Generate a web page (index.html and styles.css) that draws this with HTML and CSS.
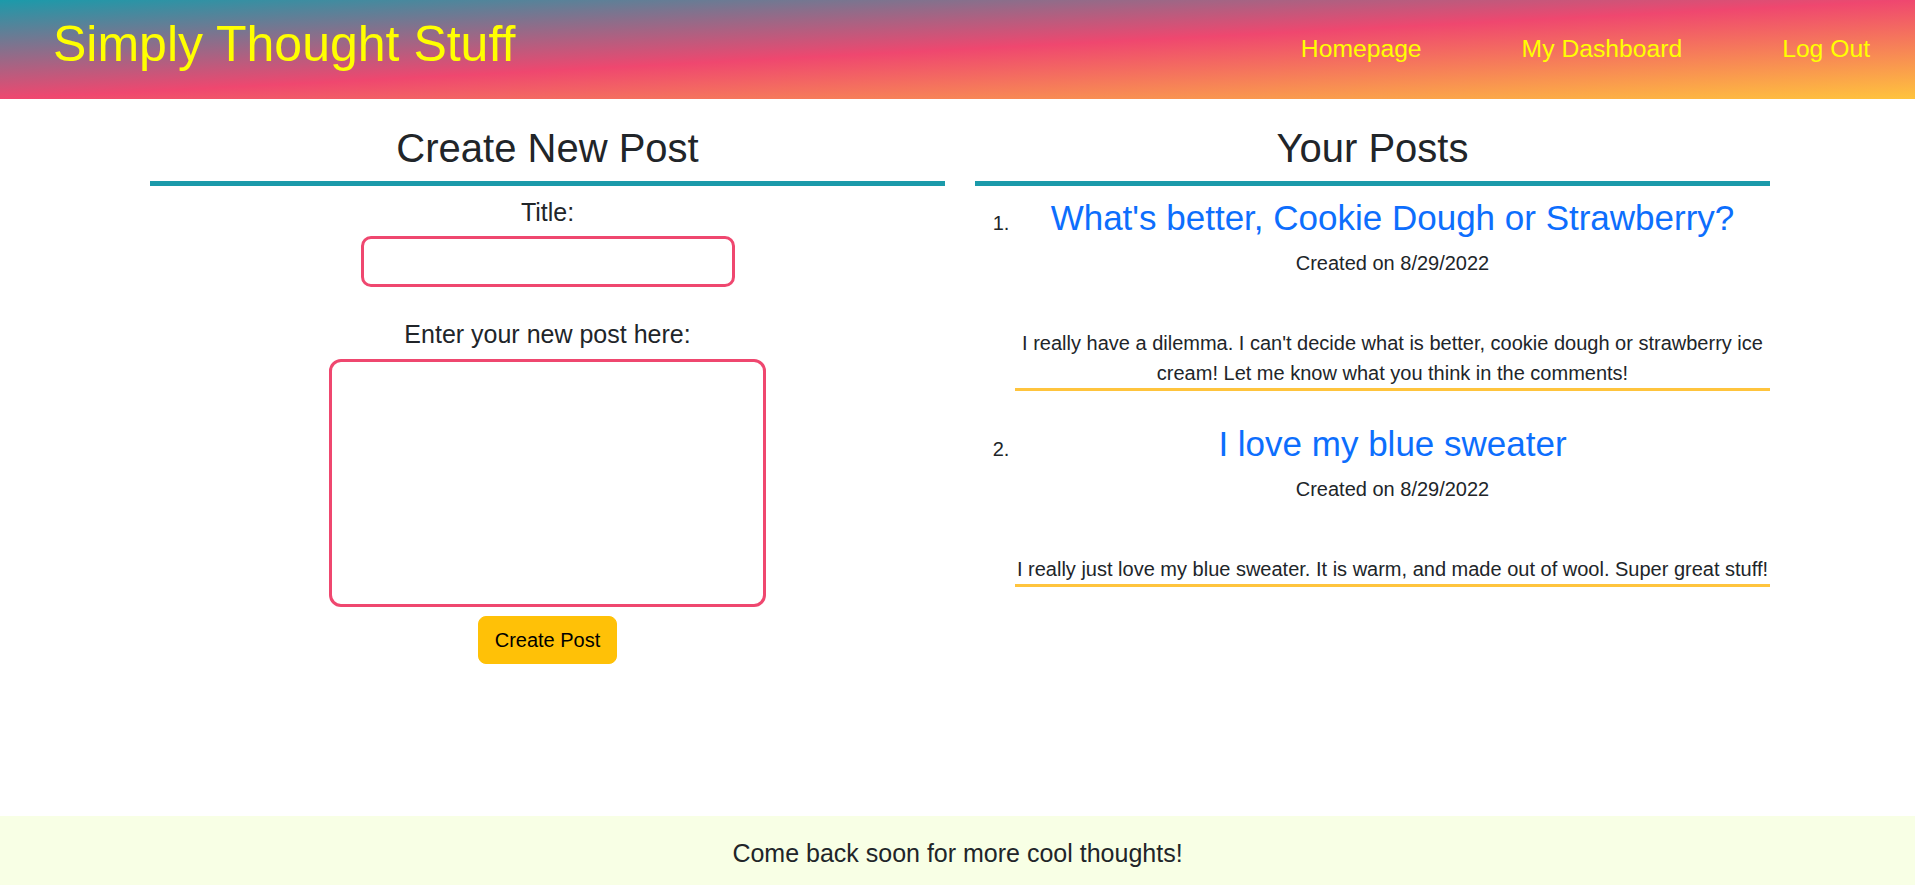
FILE: index.html
```html
<!DOCTYPE html>
<html lang="en">
<head>
<meta charset="utf-8">
<title>Simply Thought Stuff</title>
<link rel="stylesheet" href="styles.css">
</head>
<body>
<header class="site-header">
  <h1 class="brand">Simply Thought Stuff</h1>
  <nav class="nav">
    <a class="nav-link" href="#">Homepage</a>
    <a class="nav-link" href="#">My Dashboard</a>
    <a class="nav-link" href="#">Log Out</a>
  </nav>
</header>
<main class="main">
  <section class="column">
    <h2 class="section-title">Create New Post</h2>
    <form class="post-form">
      <label class="form-label" for="title">Title:</label>
      <input class="title-input" id="title" type="text">
      <label class="form-label label-body" for="body">Enter your new post here:</label>
      <textarea class="body-input" id="body"></textarea>
      <button class="btn-create" type="button">Create Post</button>
    </form>
  </section>
  <section class="column">
    <h2 class="section-title">Your Posts</h2>
    <ol class="post-list">
      <li class="post">
        <h3 class="post-title"><a href="#">What's better, Cookie Dough or Strawberry?</a></h3>
        <p class="post-date">Created on 8/29/2022</p>
        <p class="post-body">I really have a dilemma. I can't decide what is better, cookie dough or strawberry ice cream! Let me know what you think in the comments!</p>
      </li>
      <li class="post">
        <h3 class="post-title"><a href="#">I love my blue sweater</a></h3>
        <p class="post-date">Created on 8/29/2022</p>
        <p class="post-body">I really just love my blue sweater. It is warm, and made out of wool. Super great stuff!</p>
      </li>
    </ol>
  </section>
</main>
<footer class="site-footer">
  <p class="footer-text">Come back soon for more cool thoughts!</p>
</footer>
</body>
</html>
```
FILE: styles.css
```css
* { box-sizing: border-box; }

html, body { margin: 0; padding: 0; }

body {
  font-family: "Liberation Sans", Arial, sans-serif;
  color: #212529;
  background: #fff;
  min-height: 100vh;
  display: flex;
  flex-direction: column;
}

.site-header {
  height: 99px;
  display: flex;
  align-items: center;
  justify-content: space-between;
  padding: 0 45px 0 53px;
  background: linear-gradient(to bottom right, #1b9aaa 0%, #ef476f 50%, #ffc43d 100%);
}

.brand {
  margin: 0 0 10px 0;
  font-size: 50px;
  font-weight: 400;
  line-height: 1.15;
  color: #ffff00;
}

.nav {
  display: flex;
  gap: 100px;
  margin-top: 0;
}

.nav-link {
  font-size: 24.7px;
  line-height: 1.15;
  color: #ffff00;
  text-decoration: none;
}

.main {
  flex: 1;
  display: grid;
  grid-template-columns: 1fr 1fr;
  column-gap: 30px;
  align-items: start;
  padding: 25px 145px 0 150px;
}

.section-title {
  margin: 0;
  font-size: 40px;
  font-weight: 400;
  line-height: 48px;
  text-align: center;
  padding-bottom: 9px;
  border-bottom: 5px solid #1b9aaa;
}

.post-form {
  display: flex;
  flex-direction: column;
  align-items: center;
  padding-top: 8px;
}

.form-label {
  display: block;
  font-size: 25px;
  line-height: 36px;
  margin-bottom: 6px;
}

.label-body {
  margin-top: 29px;
  margin-bottom: 7px;
}

.title-input {
  width: 374px;
  height: 51px;
  border: 3px solid #ef476f;
  border-radius: 10px;
  background: #fff;
  font: inherit;
  outline: none;
}

.body-input {
  width: 437px;
  height: 248px;
  border: 3px solid #ef476f;
  border-radius: 12px;
  background: #fff;
  resize: none;
  font: inherit;
  outline: none;
  display: block;
}

.btn-create {
  margin-top: 9px;
  height: 48px;
  padding: 8px 16px;
  white-space: nowrap;
  background: #ffc107;
  border: 1px solid #ffc107;
  border-radius: 8px;
  font-family: "Liberation Sans", Arial, sans-serif;
  font-size: 20px;
  line-height: 30px;
  color: #000;
  cursor: pointer;
}

.post-list {
  margin: 9px 0 0 0;
  padding-left: 40px;
}

.post {
  font-size: 20px;
  margin-bottom: 30px;
}

.post::marker {
  color: #212529;
}

.post-title {
  margin: 0 0 9px 0;
  padding-top: 2px;
  font-size: 35px;
  font-weight: 400;
  line-height: 42px;
  text-align: center;
}

.post-title a {
  color: #0d6efd;
  text-decoration: none;
}

.post-date {
  margin: 0 0 50px 0;
  font-size: 20px;
  line-height: 30px;
  text-align: center;
}

.post-body {
  margin: 0;
  font-size: 20px;
  line-height: 30px;
  text-align: center;
  border-bottom: 3px solid #ffc43d;
}

.site-footer {
  height: 69px;
  background: #f8ffe5;
  display: flex;
  align-items: center;
  justify-content: center;
  padding-top: 4px;
}

.footer-text {
  margin: 0;
  font-size: 25px;
  line-height: 1.2;
}
```
